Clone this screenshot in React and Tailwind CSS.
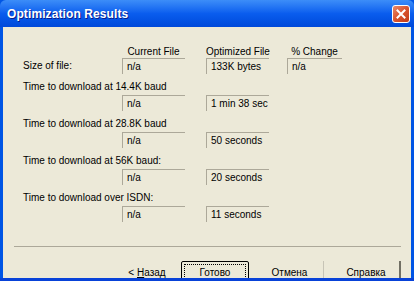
import React from 'react';

const rows = [
  { label: 'Time to download at 14.4K baud', cur: 'n/a', opt: '1 min 38 sec' },
  { label: 'Time to download at 28.8K baud', cur: 'n/a', opt: '50 seconds' },
  { label: 'Time to download at 56K baud:', cur: 'n/a', opt: '20 seconds' },
  { label: 'Time to download over ISDN:', cur: 'n/a', opt: '11 seconds' },
];

function Box({ children, w = 'w-[63px]', ml = '' }) {
  return (
    <div className={`${w} ${ml} h-[16px] border-t border-l border-[#ACA899] pl-[4px] leading-[16px] whitespace-nowrap overflow-hidden`}>
      {children}
    </div>
  );
}

export default function App() {
  return (
    <div
      className="w-[414px] h-[281px] flex flex-col bg-[#0055E5] overflow-hidden"
      style={{ fontFamily: '"Liberation Sans", Arial, sans-serif' }}
    >
      {/* title bar */}
      <div className="h-[27px] shrink-0 flex items-center justify-between pl-[7px] pr-[4px] bg-linear-to-b from-[#3C8DF8] via-[#0A5DEE] to-[#0049DA] rounded-t-[6px]">
        <span className="text-white font-bold text-[12px] tracking-[0.1px] [text-shadow:1px_1px_0_#0A1E8C]">
          Optimization Results
        </span>
        <div className="w-[18px] h-[18px] rounded-[3px] border border-white bg-linear-to-br from-[#E8896A] via-[#D9532D] to-[#C13A16] flex items-center justify-center">
          <svg width="10" height="10" viewBox="0 0 10 10">
            <path d="M1.5 1.5 L8.5 8.5 M8.5 1.5 L1.5 8.5" stroke="white" strokeWidth="2" strokeLinecap="square" />
          </svg>
        </div>
      </div>

      {/* body */}
      <div className="mx-[3px] h-[251px] shrink-0 bg-[#ECE9D8] text-[10px] text-black overflow-hidden">
        <div className="pt-[18px] pl-[20px]">
          <div className="flex h-[13px] leading-[13px]">
            <div className="w-[99px]" />
            <div className="w-[63px] text-center">Current File</div>
            <div className="w-[63px] ml-[21px] text-center whitespace-nowrap">Optimized File</div>
            <div className="w-[55px] ml-[18px] text-center">% Change</div>
          </div>

          <div className="flex h-[16px]">
            <div className="w-[99px] leading-[16px]">Size of file:</div>
            <Box>n/a</Box>
            <Box ml="ml-[21px]">133K bytes</Box>
            <Box w="w-[55px]" ml="ml-[18px]">n/a</Box>
          </div>

          {rows.map((r) => (
            <div key={r.label}>
              <div className="h-[21px] pt-[6px] leading-[13px] whitespace-nowrap">{r.label}</div>
              <div className="flex h-[16px]">
                <div className="w-[99px]" />
                <Box>{r.cur}</Box>
                <Box ml="ml-[21px]">{r.opt}</Box>
              </div>
            </div>
          ))}
        </div>

        <div className="mt-[24px] ml-[11px] mr-[10px] h-px bg-[#ACA899]" />

        <div className="mt-[14px] flex justify-end pr-[10px]">
          <div className="w-[68px] h-[23px] flex items-center justify-center">
            &lt;&nbsp;<span className="underline">Н</span>азад
          </div>
          <div className="w-[68px] h-[23px] border border-black rounded-[2px] p-[2px]">
            <div className="h-full border border-dotted border-black flex items-center justify-center">
              Готово
            </div>
          </div>
          <div className="w-[68px] h-[23px] ml-[7px] border-r border-[#C7C4B6] flex items-center justify-center">
            Отмена
          </div>
          <div className="w-[68px] h-[23px] ml-[9px] border-r-2 border-[#716F64] flex items-center justify-center">
            Справка
          </div>
        </div>
      </div>

      <div className="flex-1 bg-[#0842D8]" />
    </div>
  );
}
